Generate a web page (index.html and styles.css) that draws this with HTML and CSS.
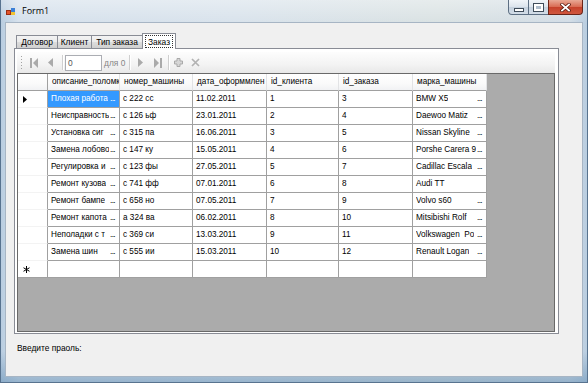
FILE: index.html
```html
<!DOCTYPE html>
<html lang="ru">
<head>
<meta charset="utf-8">
<title>Form1</title>
<link rel="stylesheet" href="styles.css">
</head>
<body>
<div class="window">
  <div class="titlebar">
    <svg class="app-icon" width="10" height="8" viewBox="0 0 10 8">
      <rect x="0.5" y="2.5" width="4" height="4" fill="#e2542c" stroke="#9c2d12"/>
      <rect x="5" y="0" width="4" height="4" fill="#3b7fd6"/>
      <rect x="5" y="4" width="4" height="3" fill="#f1c232"/>
    </svg>
    <span class="title">Form1</span>
    <div class="caption-buttons">
      <div class="cbtn min"><span class="glyph-min"></span></div>
      <div class="cbtn max"><span class="glyph-max"></span></div>
      <div class="cbtn close">
        <svg width="11" height="9" viewBox="0 0 11 9">
          <path d="M2 1.5 L9 7.5 M9 1.5 L2 7.5" stroke="#5a1a10" stroke-width="3.4" stroke-linecap="square"/>
          <path d="M2 1.5 L9 7.5 M9 1.5 L2 7.5" stroke="#ffffff" stroke-width="1.8" stroke-linecap="square"/>
        </svg>
      </div>
    </div>
  </div>
  <div class="client">
    <div class="tabcontrol">
      <div class="tabstrip">
        <div class="tab w1">Договор</div>
        <div class="tab w2">Клиент</div>
        <div class="tab w3">Тип заказа</div>
        <div class="tab active"><span class="focus">Заказ</span></div>
      </div>
      <div class="tabpage">
        <div class="toolstrip">
          <div class="grip"></div>
          <div class="tbtn"><svg width="8" height="10" viewBox="0 0 8 10"><rect x="0" y="0" width="2" height="10" fill="#aaaaaa"/><path d="M8 0 L3 5 L8 10 Z" fill="#aaaaaa"/></svg></div>
          <div class="tbtn"><svg width="5" height="9" viewBox="0 0 5 9"><path d="M5 0 L0 4.5 L5 9 Z" fill="#aaaaaa"/></svg></div>
          <div class="sep"></div>
          <div class="tbox">0</div>
          <div class="count">для 0</div>
          <div class="sep"></div>
          <div class="tbtn"><svg width="5" height="9" viewBox="0 0 5 9"><path d="M0 0 L5 4.5 L0 9 Z" fill="#aaaaaa"/></svg></div>
          <div class="tbtn"><svg width="8" height="10" viewBox="0 0 8 10"><path d="M0 0 L5 5 L0 10 Z" fill="#aaaaaa"/><rect x="6" y="0" width="2" height="10" fill="#aaaaaa"/></svg></div>
          <div class="sep narrow"></div>
          <div class="tbtn"><svg width="9" height="9" viewBox="0 0 9 9"><path d="M3 0.5 H6 V3 H8.5 V6 H6 V8.5 H3 V6 H0.5 V3 H3 Z" fill="#d6d6d6" stroke="#a9a9a9"/></svg></div>
          <div class="tbtn"><svg width="9" height="9" viewBox="0 0 9 9"><path d="M1 1 L8 8 M8 1 L1 8" stroke="#b2b2b2" stroke-width="1.7"/></svg></div>
        </div>
        <div class="datagrid">
          <div class="dg">
            <div class="hc corner"></div>
            <div class="hc">описание_поломк</div>
            <div class="hc">номер_машины</div>
            <div class="hc">дата_оформмлен</div>
            <div class="hc">id_клиента</div>
            <div class="hc">id_заказа</div>
            <div class="hc">марка_машины</div>

            <div class="rh"><svg width="4" height="7" viewBox="0 0 4 7"><path d="M0 0 L4 3.5 L0 7 Z" fill="#000"/></svg></div>
            <div class="c e sel"><span class="t">Плохая работа</span><span class="dots">...</span></div>
            <div class="c">с 222 сс</div>
            <div class="c">11.02.2011</div>
            <div class="c">1</div>
            <div class="c">3</div>
            <div class="c e"><span class="t">BMW X5</span><span class="dots">...</span></div>

            <div class="rh"></div>
            <div class="c e"><span class="t">Неисправность</span><span class="dots">...</span></div>
            <div class="c">с 126 ьф</div>
            <div class="c">23.01.2011</div>
            <div class="c">2</div>
            <div class="c">4</div>
            <div class="c e"><span class="t">Daewoo Matiz</span><span class="dots">...</span></div>

            <div class="rh"></div>
            <div class="c e"><span class="t">Установка сиг</span><span class="dots">...</span></div>
            <div class="c">с 315 па</div>
            <div class="c">16.06.2011</div>
            <div class="c">3</div>
            <div class="c">5</div>
            <div class="c e"><span class="t">Nissan Skyline</span><span class="dots">...</span></div>

            <div class="rh"></div>
            <div class="c e"><span class="t">Замена лобово</span><span class="dots">...</span></div>
            <div class="c">с 147 ку</div>
            <div class="c">15.05.2011</div>
            <div class="c">4</div>
            <div class="c">6</div>
            <div class="c e"><span class="t">Porshe Carera 9</span><span class="dots">...</span></div>

            <div class="rh"></div>
            <div class="c e"><span class="t">Регулировка и</span><span class="dots">...</span></div>
            <div class="c">с 123 фы</div>
            <div class="c">27.05.2011</div>
            <div class="c">5</div>
            <div class="c">7</div>
            <div class="c e"><span class="t">Cadillac Escala</span><span class="dots">...</span></div>

            <div class="rh"></div>
            <div class="c e"><span class="t">Ремонт кузова</span><span class="dots">...</span></div>
            <div class="c">с 741 фф</div>
            <div class="c">07.01.2011</div>
            <div class="c">6</div>
            <div class="c">8</div>
            <div class="c">Audi TT</div>

            <div class="rh"></div>
            <div class="c e"><span class="t">Ремонт бампе</span><span class="dots">...</span></div>
            <div class="c">с 658 но</div>
            <div class="c">07.05.2011</div>
            <div class="c">7</div>
            <div class="c">9</div>
            <div class="c e"><span class="t">Volvo s60</span><span class="dots">...</span></div>

            <div class="rh"></div>
            <div class="c e"><span class="t">Ремонт капота</span><span class="dots">...</span></div>
            <div class="c">а 324 ва</div>
            <div class="c">06.02.2011</div>
            <div class="c">8</div>
            <div class="c">10</div>
            <div class="c e"><span class="t">Mitsibishi Rolf</span><span class="dots">...</span></div>

            <div class="rh"></div>
            <div class="c e"><span class="t">Неполадки с т</span><span class="dots">...</span></div>
            <div class="c">с 369 си</div>
            <div class="c">13.03.2011</div>
            <div class="c">9</div>
            <div class="c">11</div>
            <div class="c e"><span class="t">Volkswagen&nbsp; Po</span><span class="dots">...</span></div>

            <div class="rh"></div>
            <div class="c e"><span class="t">Замена шин</span><span class="dots">...</span></div>
            <div class="c">с 555 ии</div>
            <div class="c">15.03.2011</div>
            <div class="c">10</div>
            <div class="c">12</div>
            <div class="c e"><span class="t">Renault Logan</span><span class="dots">...</span></div>

            <div class="rh last"><svg width="7" height="7" viewBox="0 0 7 7"><path d="M3.5 0 V7 M0.5 1.75 L6.5 5.25 M0.5 5.25 L6.5 1.75" stroke="#000" stroke-width="1"/></svg></div>
            <div class="c"></div>
            <div class="c"></div>
            <div class="c"></div>
            <div class="c"></div>
            <div class="c"></div>
            <div class="c"></div>
          </div>
        </div>
      </div>
    </div>
    <div class="prompt">Введите праоль:</div>
  </div>
</div>
</body>
</html>
```

FILE: styles.css
```css
html, body {
  margin: 0;
  padding: 0;
}
body {
  width: 588px;
  height: 383px;
  overflow: hidden;
  font-family: "Liberation Sans", Arial, sans-serif;
  font-size: 8.2px;
  color: #000;
  background: #fff;
}

.window {
  box-sizing: border-box;
  width: 588px;
  height: 383px;
  border: 1px solid #58738f;
  border-top: none;
  padding: 0 4px 5px 4px;
  display: flex;
  flex-direction: column;
  background:
    linear-gradient(to bottom, rgba(255,255,255,0.35), rgba(255,255,255,0) 22px),
    linear-gradient(to bottom, rgba(120,160,190,0) 92%, rgba(110,150,185,0.6) 100%),
    linear-gradient(to right, #b9cde0 0%, #d6e1ec 3%, #d9e3ec 40%, #dae2e3 75%, #d3dde6 97%, #b9cde0 100%);
}

.titlebar {
  height: 22px;
  flex: none;
  display: flex;
  align-items: flex-start;
}
.app-icon {
  margin: 8px 6px 0 1px;
  flex: none;
}
.title {
  font-family: "Open Sans", "Noto Sans", sans-serif;
  font-size: 9px;
  line-height: 22px;
  color: #000;
}
.caption-buttons {
  margin-left: auto;
  display: flex;
  height: 15px;
}
.cbtn {
  box-sizing: border-box;
  height: 15px;
  border: 1px solid #5d6f83;
  border-top: none;
  display: flex;
  align-items: center;
  justify-content: center;
  background: linear-gradient(to bottom, #f1f5f9 0%, #dbe3ec 50%, #c5d1de 51%, #d3dde8 100%);
}
.cbtn.min {
  width: 21px;
  border-bottom-left-radius: 4px;
}
.cbtn.max {
  width: 21px;
  margin-left: -1px;
}
.cbtn.close {
  width: 35px;
  margin-left: -1px;
  border-color: #6b2418;
  border-bottom-right-radius: 4px;
  background: linear-gradient(to bottom, #e9a995 0%, #d86a52 50%, #c6412a 51%, #d0573f 100%);
}
.glyph-min {
  width: 8px;
  height: 2px;
  margin-top: 6px;
  background: #fff;
  border: 1px solid #3f4c5a;
}
.glyph-max {
  box-sizing: border-box;
  width: 9px;
  height: 7px;
  border: 2px solid #fff;
  outline: 1px solid #3f4c5a;
  background: #aebccb;
}

.client {
  flex: 1;
  min-height: 0;
  border: 1px solid #a7b5c4;
  background: #f0f0f0;
  display: flex;
  flex-direction: column;
}

.tabcontrol {
  margin: 10px 0 0 8px;
  width: 545px;
}
.tabstrip {
  display: flex;
  align-items: flex-end;
  height: 15px;
  padding-left: 2px;
}
.tab {
  box-sizing: border-box;
  height: 13px;
  border: 1px solid #898c95;
  border-bottom: none;
  margin-right: -1px;
  background: linear-gradient(to bottom, #f3f3f3 0%, #ebebeb 50%, #dddddd 51%, #cfcfcf 100%);
  font-size: 8.4px;
  line-height: 12px;
  text-align: center;
  white-space: nowrap;
}
.tab.w1 { width: 42px; }
.tab.w2 { width: 35px; }
.tab.w3 { width: 52px; }
.tab.active {
  position: relative;
  z-index: 2;
  width: 34px;
  height: 16px;
  margin-bottom: -1px;
  background: #fff;
  padding: 1px 2px 0 2px;
}
.focus {
  display: block;
  height: 13px;
  line-height: 12px;
  box-sizing: border-box;
  border: 1px dotted #333;
}

.tabpage {
  box-sizing: border-box;
  height: 286px;
  border: 1px solid #898c95;
  background: #fff;
  padding: 3px 3px 1px 2px;
  display: flex;
  flex-direction: column;
}

.toolstrip {
  height: 21px;
  flex: none;
  box-sizing: border-box;
  display: flex;
  align-items: center;
  padding-left: 3px;
  background: linear-gradient(to bottom, #fdfdfd 0%, #f3f3f3 60%, #e8e8e8 100%);
}
.grip {
  width: 5px;
  height: 13px;
  box-sizing: border-box;
  background: repeating-linear-gradient(to bottom, #a3a3a3 0 1px, transparent 1px 3px);
  background-size: 1px 100%;
  background-repeat: no-repeat;
  background-position: 1px 0;
}
.tbtn {
  width: 17px;
  height: 17px;
  display: flex;
  align-items: center;
  justify-content: center;
}
.sep {
  width: 6px;
  height: 15px;
  display: flex;
  justify-content: center;
}
.sep::before {
  content: "";
  width: 1px;
  height: 15px;
  background: #cfcfcf;
  box-shadow: 1px 0 0 #fff;
}
.sep.narrow {
  width: 4px;
}
.tbox {
  box-sizing: border-box;
  width: 37px;
  height: 16px;
  border: 1px solid #abadb3;
  background: #fff;
  color: #555;
  font-size: 8.4px;
  line-height: 14px;
  padding-left: 2px;
}
.count {
  width: 24px;
  box-sizing: border-box;
  padding-left: 2px;
  color: #858585;
  font-size: 8.4px;
  white-space: nowrap;
}

.datagrid {
  flex: 1;
  min-height: 0;
  box-sizing: border-box;
  border: 1px solid #696969;
  background: #ababab;
  overflow: hidden;
}
.dg {
  display: grid;
  width: max-content;
  grid-template-columns: 30px 72px 73px 74px 72px 74px 74px;
  grid-auto-rows: 17px;
}
.dg > div {
  box-sizing: border-box;
  white-space: nowrap;
  overflow: hidden;
  font-size: 8.2px;
  line-height: 16px;
}
.hc {
  background: linear-gradient(to bottom, #ffffff 0%, #fafafa 60%, #f1f2f4 100%);
  border-right: 1px solid #e2e3e5;
  border-bottom: 1px solid #a0a0a0;
  padding-left: 4px;
}
.hc.corner {
  border-right: 1px solid #a0a0a0;
}
.rh {
  background: #fff;
  border-right: 1px solid #a0a0a0;
  border-bottom: 1px solid #f3f3f3;
  display: flex;
  align-items: center;
  padding-left: 5px;
}
.rh.last {
  border-bottom-color: #a0a0a0;
}
.c {
  background: #fff;
  border-right: 1px solid #a0a0a0;
  border-bottom: 1px solid #a0a0a0;
  padding: 0 3px 0 3px;
}
.c.e {
  display: flex;
  justify-content: space-between;
}
.c.e .t {
  overflow: hidden;
  min-width: 0;
  white-space: pre;
}
.c.e .dots {
  flex: none;
  padding-left: 1px;
  letter-spacing: -0.6px;
  padding-right: 1px;
}
.c.sel {
  background: #3399ff;
  color: #fff;
}

.prompt {
  margin: 9px 0 0 11px;
  font-size: 8.4px;
  line-height: 11px;
}
```
